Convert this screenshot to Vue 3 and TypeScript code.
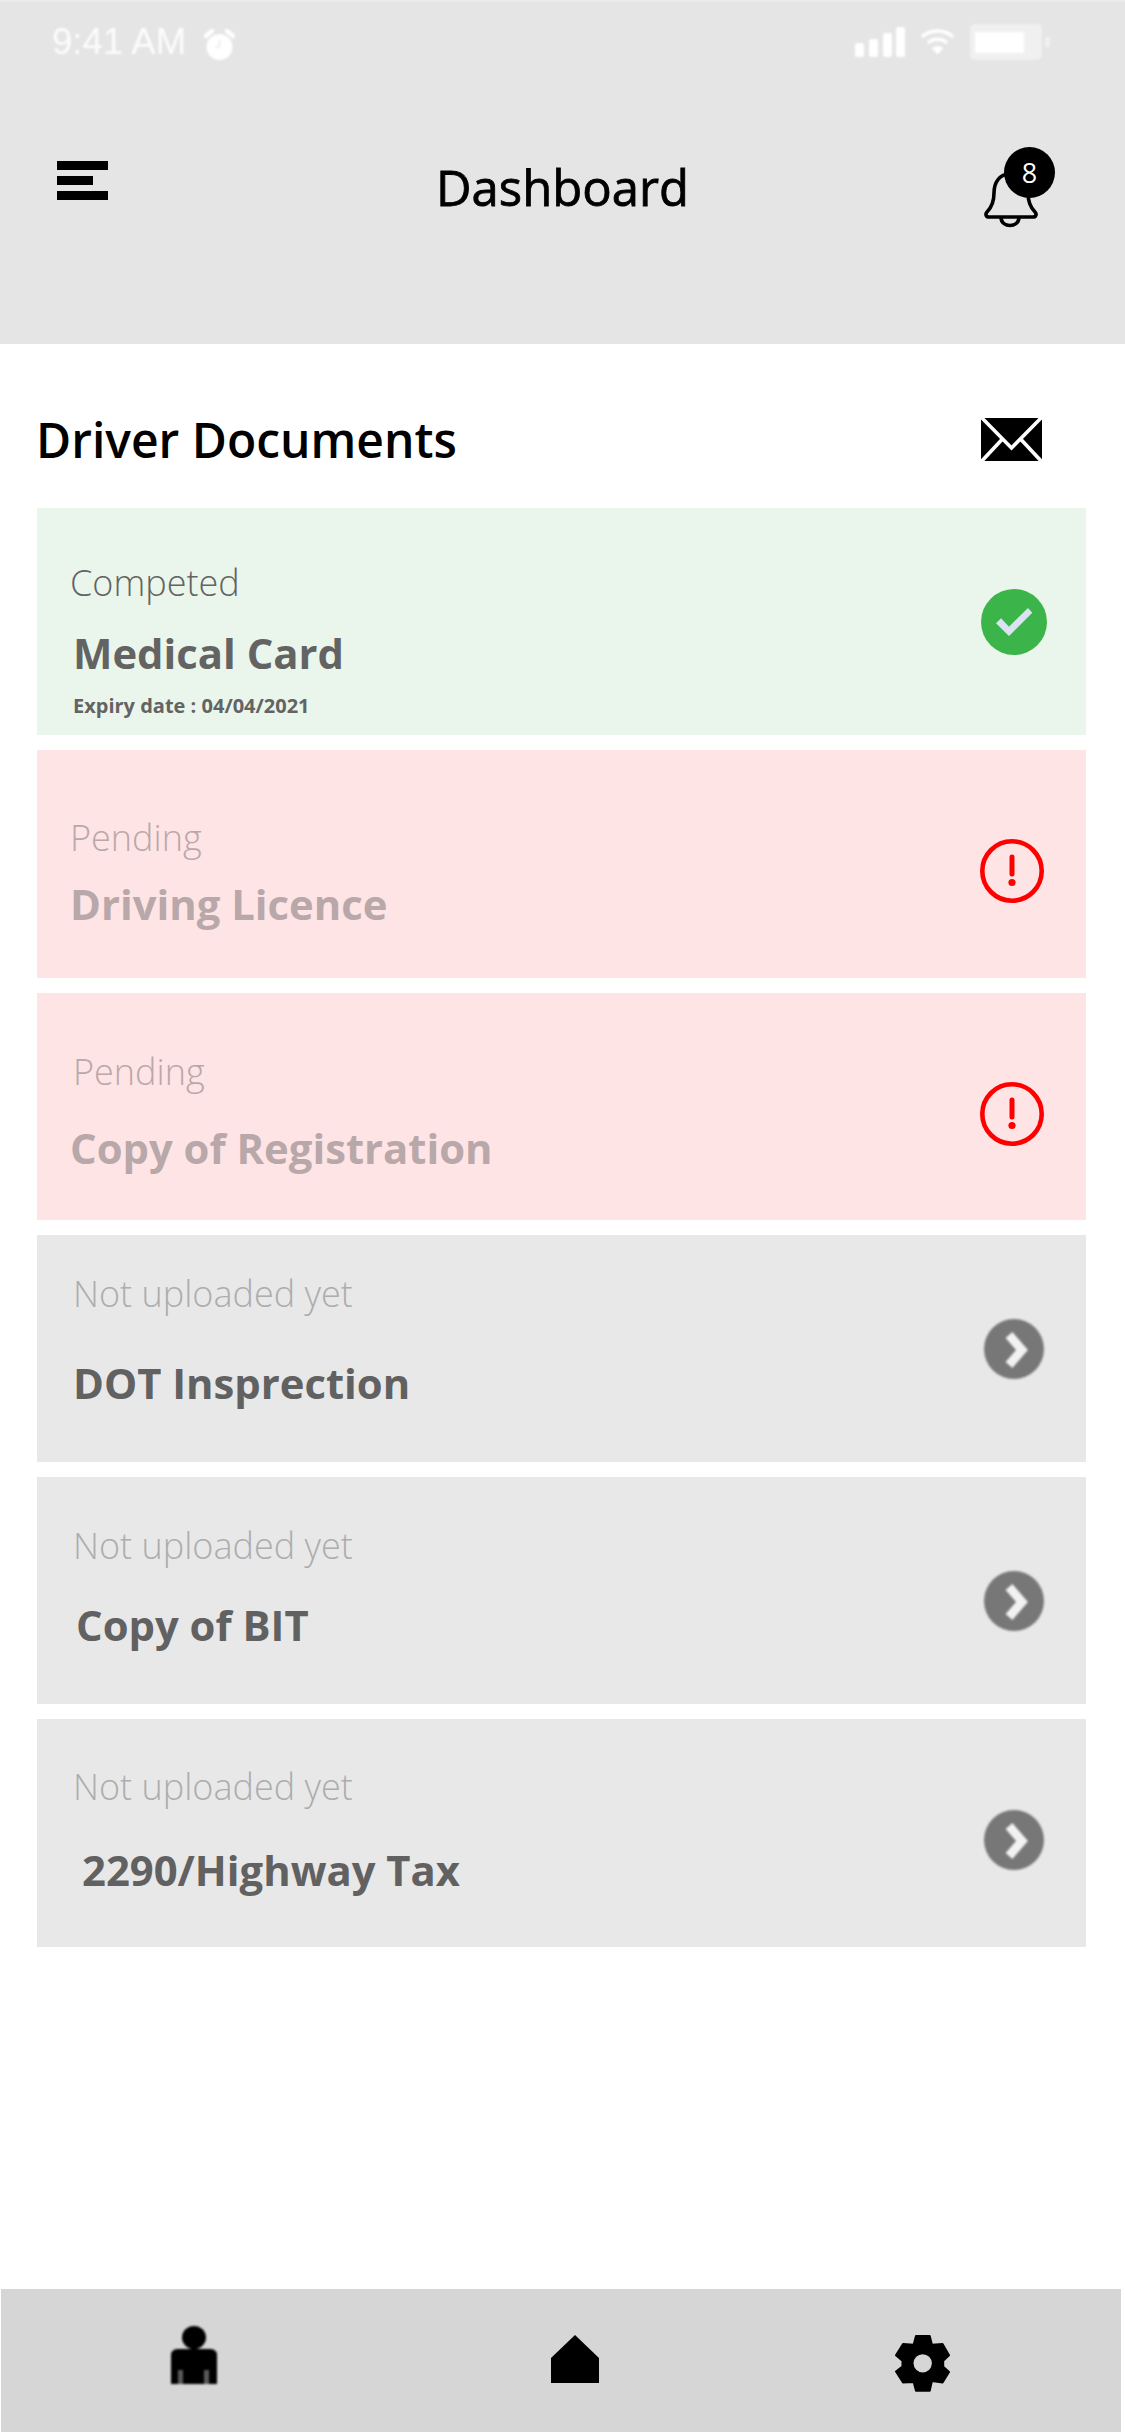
<script setup lang="ts">
type Status = 'done' | 'pending' | 'todo'

interface Doc {
  label: string
  title: string
  status: Status
  expiry?: string
  labelLeft: number
  titleLeft: number
  top: number
  gap: number
  iconShift: number
}

const docs: Doc[] = [
  { label: 'Competed', title: 'Medical Card', status: 'done', expiry: 'Expiry date : 04/04/2021', labelLeft: 33, titleLeft: 36, top: 53, gap: 22, iconShift: 0 },
  { label: 'Pending', title: 'Driving Licence', status: 'pending', labelLeft: 33, titleLeft: 33, top: 66, gap: 18, iconShift: 7 },
  { label: 'Pending', title: 'Copy of Registration', status: 'pending', labelLeft: 36, titleLeft: 33, top: 57, gap: 28, iconShift: 8 },
  { label: 'Not uploaded yet', title: 'DOT Insprection', status: 'todo', labelLeft: 36, titleLeft: 36, top: 37, gap: 41, iconShift: 0 },
  { label: 'Not uploaded yet', title: 'Copy of BIT', status: 'todo', labelLeft: 36, titleLeft: 39, top: 47, gap: 31, iconShift: 10 },
  { label: 'Not uploaded yet', title: '2290/Highway Tax', status: 'todo', labelLeft: 36, titleLeft: 45, top: 46, gap: 35, iconShift: 7 }
]
</script>

<template>
  <div class="screen">
    <header class="top">
      <div class="status">
        <div class="status-left">
          <span class="time">9:41 AM</span>
          <svg class="alarm" width="31" height="31" viewBox="0 0 31 31">
            <circle cx="15.5" cy="18" r="13" fill="#fff" />
            <path d="M2 7 L8 2 M29 7 L23 2" stroke="#fff" stroke-width="4.5" stroke-linecap="round" />
            <path d="M15.5 11v7h-4" stroke="#e5e5e5" stroke-width="1.2" fill="none" />
          </svg>
        </div>
        <div class="status-right">
          <svg width="50" height="30" viewBox="0 0 50 30">
            <rect x="0" y="16" width="9" height="14" rx="2" fill="#fff" />
            <rect x="14" y="12" width="9" height="18" rx="2" fill="#fff" />
            <rect x="28" y="6" width="9" height="24" rx="2" fill="#fff" />
            <rect x="41" y="0" width="9" height="30" rx="2" fill="#fff" />
          </svg>
          <svg width="33" height="26" viewBox="0 0 33 26">
            <path d="M1 8 C9 0 24 0 32 8" stroke="#fff" stroke-width="3.4" fill="none" />
            <path d="M7 14 C12 9 21 9 26 14" stroke="#fff" stroke-width="3.4" fill="none" />
            <path d="M10.5 19 L16.5 25.5 L22.5 19 C19 16.5 14 16.5 10.5 19 Z" fill="#fff" />
          </svg>
          <div class="battery"><div class="battery-fill"></div></div>
          <div class="battery-cap"></div>
        </div>
      </div>
      <div class="nav">
        <div class="menu">
          <span class="bar"></span>
          <span class="bar short"></span>
          <span class="bar"></span>
        </div>
        <h1 class="page-title">Dashboard</h1>
        <div class="bell-wrap">
          <svg class="bell" width="54" height="56" viewBox="0 0 54 56">
            <path d="M26 2 C15 2 10 11 10 21 C10 30 8 35 3 40 C1 42 2 45 5 45 H49 C52 45 53 42 51 40 C46 35 44 30 44 21 C44 11 37 2 26 2 Z" fill="none" stroke="#000" stroke-width="3.6" stroke-linejoin="round" />
            <path d="M17 46 C18 56 34 56 35 46" fill="none" stroke="#000" stroke-width="3.6" />
          </svg>
          <span class="badge">8</span>
        </div>
      </div>
    </header>

    <main class="content">
      <div class="section-head">
        <h2 class="section-title">Driver Documents</h2>
        <svg width="61" height="43" viewBox="0 0 61 43">
          <rect width="61" height="43" fill="#000" />
          <path d="M0 -1 L30.5 30 L61 -1 M0 44 L20.5 22 M61 44 L40.5 22" fill="none" stroke="#fff" stroke-width="3.6" />
        </svg>
      </div>

      <div class="docs">
        <article v-for="doc in docs" :key="doc.title" class="doc" :class="doc.status" :style="{ paddingTop: doc.top + 'px' }">
          <div class="doc-text">
            <div class="doc-label" :style="{ marginLeft: doc.labelLeft + 'px' }">{{ doc.label }}</div>
            <div class="doc-title" :style="{ marginLeft: doc.titleLeft + 'px', marginTop: doc.gap + 'px' }">{{ doc.title }}</div>
            <div v-if="doc.expiry" class="doc-expiry">{{ doc.expiry }}</div>
          </div>
          <div class="doc-side" :style="{ top: -doc.top / 2 + doc.iconShift + 'px' }">
            <svg v-if="doc.status === 'done'" width="66" height="66" viewBox="0 0 66 66">
              <circle cx="33" cy="33" r="33" fill="#3bb54a" />
              <polygon points="15,34.3 20,29.3 28,37.7 47,19 51.3,23.7 28,47" fill="#d9e3f3" />
            </svg>
            <svg v-else-if="doc.status === 'pending'" width="64" height="64" viewBox="0 0 64 64">
              <circle cx="32" cy="32" r="29.7" fill="none" stroke="#f00" stroke-width="4.6" />
              <path d="M32 18 V35" stroke="#f00" stroke-width="5" stroke-linecap="round" />
              <circle cx="32" cy="43.5" r="3.6" fill="#f00" />
            </svg>
            <svg v-else class="soft" width="60" height="60" viewBox="0 0 60 60">
              <circle cx="30" cy="30" r="30" fill="#777" />
              <path d="M25 16 L38 31 L25 46" fill="none" stroke="#f2f2f2" stroke-width="9" />
            </svg>
          </div>
        </article>
      </div>
    </main>

    <footer class="tabs">
      <svg class="tab-person soft" width="46" height="58" viewBox="0 0 46 58">
        <ellipse cx="23" cy="11.5" rx="12" ry="11.5" fill="#000" />
        <path d="M0 58 V29 C0 24 4 23 8 23 H38 C42 23 46 24 46 29 V58 Z" fill="#000" />
        <rect x="7" y="44" width="5" height="14" fill="#5a5a5a" />
        <rect x="33" y="44" width="5" height="14" fill="#5a5a5a" />
      </svg>
      <svg class="tab-home" width="48" height="48" viewBox="0 0 48 48">
        <polygon points="24,0 48,23 48,48 0,48 0,23" fill="#000" />
      </svg>
      <svg class="tab-gear" width="55" height="57" viewBox="-1 -1 57 59">
        <polygon points="20.7,0 35,0 37.3,9 48.3,8.3 55,20 49,25.7 49,31.7 55,37.3 48.3,48.3 37.3,46.7 35,56.7 20.7,56.7 18.3,47.7 7.3,48.3 0,36.7 6.7,31.7 6.7,25.7 0,20 7.3,8.3 18.3,9" fill="#000" stroke="#000" stroke-width="2" stroke-linejoin="round" />
        <circle cx="27.7" cy="28.3" r="9.5" fill="#d6d6d6" />
      </svg>
    </footer>
  </div>
</template>

<style scoped>
.screen {
  width: 1125px;
  height: 2436px;
  display: flex;
  flex-direction: column;
  background: #fff;
  font-family: "Open Sans", "Noto Sans", sans-serif;
  overflow: hidden;
}
.top {
  height: 344px;
  background: #e5e5e5;
  border-top: 2px solid #eaeaea;
  box-sizing: border-box;
  flex: none;
}
.status {
  display: flex;
  justify-content: space-between;
  align-items: center;
  box-sizing: border-box;
  padding: 22px 75px 0 52px;
  height: 58px;
}
.status-left, .status-right {
  display: flex;
  align-items: center;
  filter: blur(0.8px);
}
.status-left { gap: 18px; }
.status-right { gap: 16px; }
.time {
  font-family: "Liberation Sans", sans-serif;
  font-size: 36.6px;
  line-height: 36px;
  color: #fff;
  opacity: 0.9;
}
.alarm { margin-top: 4px; }
.battery {
  width: 72px;
  height: 36px;
  background: #f0f0f0;
  border-radius: 5px;
  padding: 8px 18px 7px 5px;
  box-sizing: border-box;
}
.battery-fill {
  width: 100%;
  height: 100%;
  background: #fff;
}
.battery-cap {
  width: 5px;
  height: 10px;
  margin-left: -13px;
  background: #f0f0f0;
}
.nav {
  display: grid;
  grid-template-columns: 1fr auto 1fr;
  align-items: start;
  padding: 101px 57px 0;
}
.menu {
  display: flex;
  flex-direction: column;
  gap: 6px;
}
.bar {
  display: block;
  width: 51px;
  height: 9px;
  background: #000;
}
.bar.short { width: 36px; }
.page-title {
  margin: -6px 0 0;
  font-size: 49px;
  font-weight: 400;
  -webkit-text-stroke: 0.8px #000;
  color: #000;
  line-height: 65px;
}
.bell-wrap {
  position: relative;
  justify-self: end;
  width: 54px;
  height: 56px;
  margin: 11px 30px 0 0;
}
.bell { display: block; }
.badge {
  position: absolute;
  left: 20px;
  top: -25px;
  width: 51px;
  height: 51px;
  border-radius: 50%;
  background: #000;
  color: #fff;
  font-size: 27px;
  line-height: 51px;
  text-align: center;
}
.content {
  flex: 1;
  padding: 0 39px 0 37px;
}
.section-head {
  display: flex;
  align-items: center;
  justify-content: space-between;
  box-sizing: border-box;
  height: 164px;
  padding: 27px 44px 0 0;
}
.section-title {
  margin: 0 0 0 -1px;
  font-size: 48px;
  font-weight: 600;
  color: #000;
}
.docs {
  display: flex;
  flex-direction: column;
  gap: 15px;
}
.doc {
  height: 227.3px;
  box-sizing: border-box;
  display: flex;
  justify-content: space-between;
  align-items: flex-start;
}
.doc.done { background: #eaf6eb; color: #636363; }
.doc.pending { background: #fee4e5; color: #b9a8a9; }
.doc.todo { background: #e8e8e8; color: #616161; }
.doc-label {
  font-size: 36px;
  font-weight: 300;
  line-height: 44px;
}
.doc.todo .doc-label { color: #adadad; }
.doc-title {
  font-size: 41.8px;
  font-weight: 700;
  line-height: 52px;
}
.doc-expiry {
  margin: 15px 0 0 36px;
  font-size: 20px;
  font-weight: 700;
  line-height: 24px;
}
.doc-side {
  position: relative;
  align-self: center;
  display: flex;
  margin-right: 42px;
}
.doc.done .doc-side { margin-right: 39px; }
.soft { filter: blur(0.9px); }
.tabs {
  flex: none;
  height: 143px;
  margin: 0 4px 4px 1px;
  background: #d6d6d6;
  display: flex;
  align-items: flex-start;
  padding-left: 170px;
}
.tab-person { margin-top: 37px; }
.tab-home { margin: 46px 0 0 334px; }
.tab-gear { margin: 46px 0 0 296px; }
</style>

<style>
html, body { margin: 0; }
</style>
